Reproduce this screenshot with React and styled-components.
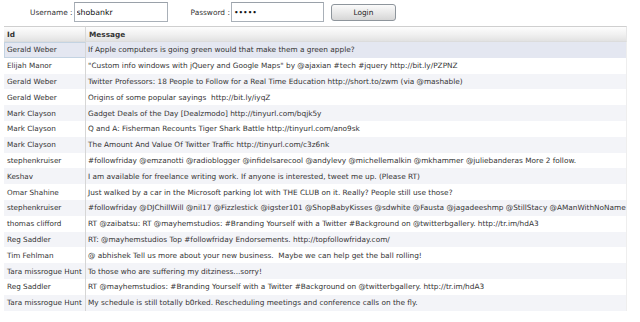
import React from "react";
import styled, { createGlobalStyle } from "styled-components";

const tweets = [
  ["Gerald Weber", "If Apple computers is going green would that make them a green apple?"],
  ["Elijah Manor", "\"Custom info windows with jQuery and Google Maps\" by @ajaxian #tech #jquery http://bit.ly/PZPNZ"],
  ["Gerald Weber", "Twitter Professors: 18 People to Follow for a Real Time Education http://short.to/zwm (via @mashable)"],
  ["Gerald Weber", "Origins of some popular sayings  http://bit.ly/iyqZ"],
  ["Mark Clayson", "Gadget Deals of the Day [Dealzmodo] http://tinyurl.com/bqjk5y"],
  ["Mark Clayson", "Q and A: Fisherman Recounts Tiger Shark Battle http://tinyurl.com/ano9sk"],
  ["Mark Clayson", "The Amount And Value Of Twitter Traffic http://tinyurl.com/c3z6nk"],
  ["stephenkruiser", "#followfriday @emzanotti @radioblogger @infidelsarecool @andylevy @michellemalkin @mkhammer @juliebanderas More 2 follow."],
  ["Keshav", "I am available for freelance writing work. If anyone is interested, tweet me up. (Please RT)"],
  ["Omar Shahine", "Just walked by a car in the Microsoft parking lot with THE CLUB on it. Really? People still use those?"],
  ["stephenkruiser", "#followfriday @DJChillWill @nil17 @Fizzlestick @igster101 @ShopBabyKisses @sdwhite @Fausta @jagadeeshmp @StillStacy @AManWithNoName"],
  ["thomas clifford", "RT @zaibatsu: RT @mayhemstudios: #Branding Yourself with a Twitter #Background on @twitterbgallery. http://tr.im/hdA3"],
  ["Reg Saddler", "RT: @mayhemstudios Top #followfriday Endorsements. http://topfollowfriday.com/"],
  ["Tim Fehlman", "@ abhishek Tell us more about your new business.  Maybe we can help get the ball rolling!"],
  ["Tara missrogue Hunt", "To those who are suffering my ditziness...sorry!"],
  ["Reg Saddler", "RT @mayhemstudios: #Branding Yourself with a Twitter #Background on @twitterbgallery. http://tr.im/hdA3"],
  ["Tara missrogue Hunt", "My schedule is still totally b0rked. Rescheduling meetings and conference calls on the fly."],
];

const App = () => {
  return (
    <>
      <GlobalStyle />
      <Page>
        <LoginBar>
          <Field>
            <Label>Username :</Label>
            <Input type="text" defaultValue="shobankr" $width={94} />
          </Field>
          <Field>
            <Label>Password :</Label>
            <Input type="password" defaultValue="12345" $width={93} />
          </Field>
          <LoginButton>Login</LoginButton>
        </LoginBar>

        <Grid>
          <HeadCell $first>Id</HeadCell>
          <HeadCell>Message</HeadCell>
          {tweets.map(([user, text], i) => (
            <Row key={i} $shade={i === 0 ? "selected" : i % 2 === 0 ? "alt" : "plain"}>
              <IdCell $current={i === 0}>{user}</IdCell>
              <MsgCell>{text}</MsgCell>
            </Row>
          ))}
        </Grid>
      </Page>
    </>
  );
};

export default App;

const GlobalStyle = createGlobalStyle`
  body {
    margin: 0;
    background: #fff;
    font-family: "DejaVu Sans", Verdana, sans-serif;
    color: #333;
  }
`;

const Page = styled.div`
  width: 640px;
  height: 322px;
  overflow: hidden;
`;

const LoginBar = styled.div`
  display: flex;
  align-items: center;
  height: 24px;
  padding: 0 0 0 30px;
  margin-bottom: 2px;
`;

const Field = styled.div`
  display: flex;
  align-items: center;
  margin-right: 23px;

  &:nth-child(2) {
    margin-right: 7px;
  }
`;

const Label = styled.span`
  font-size: 7.4px;
  color: #333;
  margin-right: 1px;
  white-space: nowrap;
`;

const Input = styled.input`
  box-sizing: border-box;
  width: ${(p) => p.$width}px;
  height: 20px;
  margin: 0;
  padding: 0 2px;
  border: 1px solid #a9b0b8;
  border-top-color: #9aa1a9;
  background: #fff;
  font-family: "DejaVu Sans", Verdana, sans-serif;
  font-size: 7.8px;
  color: #111;
  outline: none;
`;

const LoginButton = styled.button`
  box-sizing: border-box;
  width: 65px;
  height: 17px;
  margin: 1px 0 0 0;
  padding: 0;
  border: 1px solid #8e959c;
  border-radius: 3px;
  background: linear-gradient(#fbfbfb, #e9e9e9 50%, #d6d6d6);
  font-family: "DejaVu Sans", Verdana, sans-serif;
  font-size: 7.4px;
  color: #222;
`;

const Grid = styled.div`
  display: grid;
  grid-template-columns: 82px 541px;
  margin-left: 4px;
  font-size: 7.35px;
`;

const HeadCell = styled.div`
  height: 16px;
  box-sizing: border-box;
  display: flex;
  align-items: center;
  padding-left: 3px;
  border-top: 1px solid #cfcfcf;
  border-bottom: 1px solid #dcdcdc;
  border-right: ${(p) => (p.$first ? "1px solid #d8d8d8" : "1px solid #e6e6e6")};
  background: linear-gradient(#fdfdfd, #f0f0f0 55%, #e2e2e2);
  font-weight: bold;
  color: #333;
`;

const shades = {
  selected: "#e4e7f1",
  alt: "#f3f4f8",
  plain: "#ffffff",
};

const Row = styled.div`
  display: contents;

  & > div {
    background: ${(p) => shades[p.$shade]};
  }
`;

const Cell = styled.div`
  height: 15.8px;
  box-sizing: border-box;
  display: flex;
  align-items: center;
  white-space: pre;
  overflow: hidden;
  color: #333;
`;

const IdCell = styled(Cell)`
  font-size: 7.25px;
  border: ${(p) => (p.$current ? "1px solid #c3d3e2" : "none")};
  border-right: 1px solid #d6d6d6;
  padding-left: ${(p) => (p.$current ? "2px" : "3px")};
`;

const MsgCell = styled(Cell)`
  padding-left: 2px;
  border-right: 1px solid #eeeeee;
`;
